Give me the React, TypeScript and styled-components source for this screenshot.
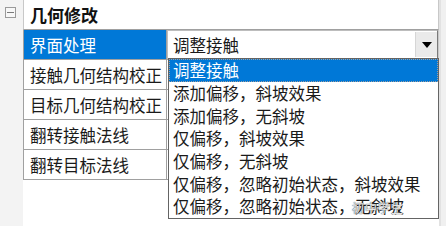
import React from "react";
import styled, { createGlobalStyle } from "styled-components";

const Global = createGlobalStyle`
  html, body { margin: 0; padding: 0; background: #ffffff; }
  body { font-family: "Noto Sans CJK SC", "Noto Sans", sans-serif; }
`;

const Frame = styled.div`
  position: relative;
  width: 446px;
  height: 226px;
  display: flex;
  overflow: hidden;
  background: #ffffff;
  color: #1a1a1a;
  font-size: 16.5px;
`;

const Gutter = styled.div`
  width: 23px;
  flex: none;
  background: #f3f3f3;
  display: flex;
  flex-direction: column;
  align-items: flex-start;
  padding: 7px 0 0 5px;
  box-sizing: border-box;
`;

const Toggle = styled.div`
  width: 11px;
  height: 11px;
  box-sizing: border-box;
  border: 1px solid #9a9a9a;
  background: #f7f7f7;
  display: flex;
  align-items: center;
  justify-content: center;
  &::after {
    content: "";
    width: 7px;
    height: 1px;
    background: #7a7a7a;
  }
`;

const Main = styled.div`
  width: 416px;
  flex: none;
  display: flex;
  flex-direction: column;
`;

const Side = styled.div`
  flex: 1;
  background: #f0f0f0;
  border-left: 2px solid #e2e2e2;
`;

const Header = styled.div`
  height: 29px;
  border-bottom: 1px solid #a0a0a0;
  border-left: 1px solid #c8c8c8;
  border-right: 1px solid #c8c8c8;
  display: flex;
  align-items: center;
  padding-left: 6px;
  font-weight: 700;
  font-size: 17px;
  color: #111;
`;

const Grid = styled.div`
  display: grid;
  grid-template-columns: 144px 1fr;
`;

const Label = styled.div<{ $selected?: boolean }>`
  height: 29px;
  box-sizing: border-box;
  border-left: 1px solid #a0a0a0;
  border-right: 1px solid #a0a0a0;
  border-bottom: 1px solid #a0a0a0;
  display: flex;
  align-items: center;
  padding-left: 6px;
  white-space: nowrap;
  overflow: hidden;
  background: ${(p) => (p.$selected ? "#0078d7" : "#ffffff")};
  color: ${(p) => (p.$selected ? "#ffffff" : "#1a1a1a")};
  height: 30px;
`;

const Value = styled.div`
  height: 30px;
  box-sizing: border-box;
  border-bottom: 1px solid #a0a0a0;
  border-right: 1px solid #c8c8c8;
`;

const Combo = styled.div`
  height: 29px;
  box-sizing: border-box;
  border: 1px solid #bdbdbd;
  border-right: 1px solid #7a7a7a;
  display: flex;
  align-items: center;
  padding-left: 5px;
  background: #fff;
`;

const ComboText = styled.span`
  flex: 1;
`;

const DropButton = styled.div`
  width: 21px;
  align-self: stretch;
  margin: 1px 0;
  background: #eaeaea;
  border-left: 1px solid #d6d6d6;
  display: flex;
  align-items: center;
  justify-content: center;
`;

const ListBox = styled.div`
  position: absolute;
  left: 168px;
  top: 58px;
  width: 271px;
  height: 161px;
  box-sizing: border-box;
  border: 1px solid #646464;
  background: #ffffff;
  display: flex;
  flex-direction: column;
`;

const Item = styled.div<{ $active?: boolean }>`
  height: 22.7px;
  display: flex;
  align-items: center;
  padding-left: 4px;
  box-sizing: border-box;
  white-space: nowrap;
  background: ${(p) => (p.$active ? "#0078d7" : "transparent")};
  color: ${(p) => (p.$active ? "#ffffff" : "#1a1a1a")};
  outline: ${(p) => (p.$active ? "1px dotted #a0a0a0" : "none")};
  outline-offset: -1px;
`;

const Watermark = styled.div`
  position: absolute;
  left: 352px;
  top: 199px;
  font-size: 12px;
  color: rgba(255, 255, 255, 0.85);
  text-shadow: 0 0 1px #555, 0 0 1px #555;
  letter-spacing: 1px;
`;

const rows = ["接触几何结构校正", "目标几何结构校正", "翻转接触法线", "翻转目标法线"];
const options = [
  "调整接触",
  "添加偏移，斜坡效果",
  "添加偏移，无斜坡",
  "仅偏移，斜坡效果",
  "仅偏移，无斜坡",
  "仅偏移，忽略初始状态，斜坡效果",
  "仅偏移，忽略初始状态，无斜坡",
];

export default function App() {
  return (
    <>
      <Global />
      <Frame>
        <Gutter>
          <Toggle />
        </Gutter>
        <Main>
          <Header>几何修改</Header>
          <Grid>
            <Label $selected>界面处理</Label>
            <Value>
              <Combo>
                <ComboText>调整接触</ComboText>
                <DropButton>
                  <svg width="10" height="6" viewBox="0 0 10 6">
                    <path d="M0 0 H10 L5 6 Z" fill="#000" />
                  </svg>
                </DropButton>
              </Combo>
            </Value>
            {rows.map((r) => (
              <React.Fragment key={r}>
                <Label>{r}</Label>
                <Value />
              </React.Fragment>
            ))}
          </Grid>
        </Main>
        <Side />
        <ListBox>
          {options.map((o, i) => (
            <Item key={o} $active={i === 0}>
              {o}
            </Item>
          ))}
        </ListBox>
        <Watermark>初中学生</Watermark>
      </Frame>
    </>
  );
}
